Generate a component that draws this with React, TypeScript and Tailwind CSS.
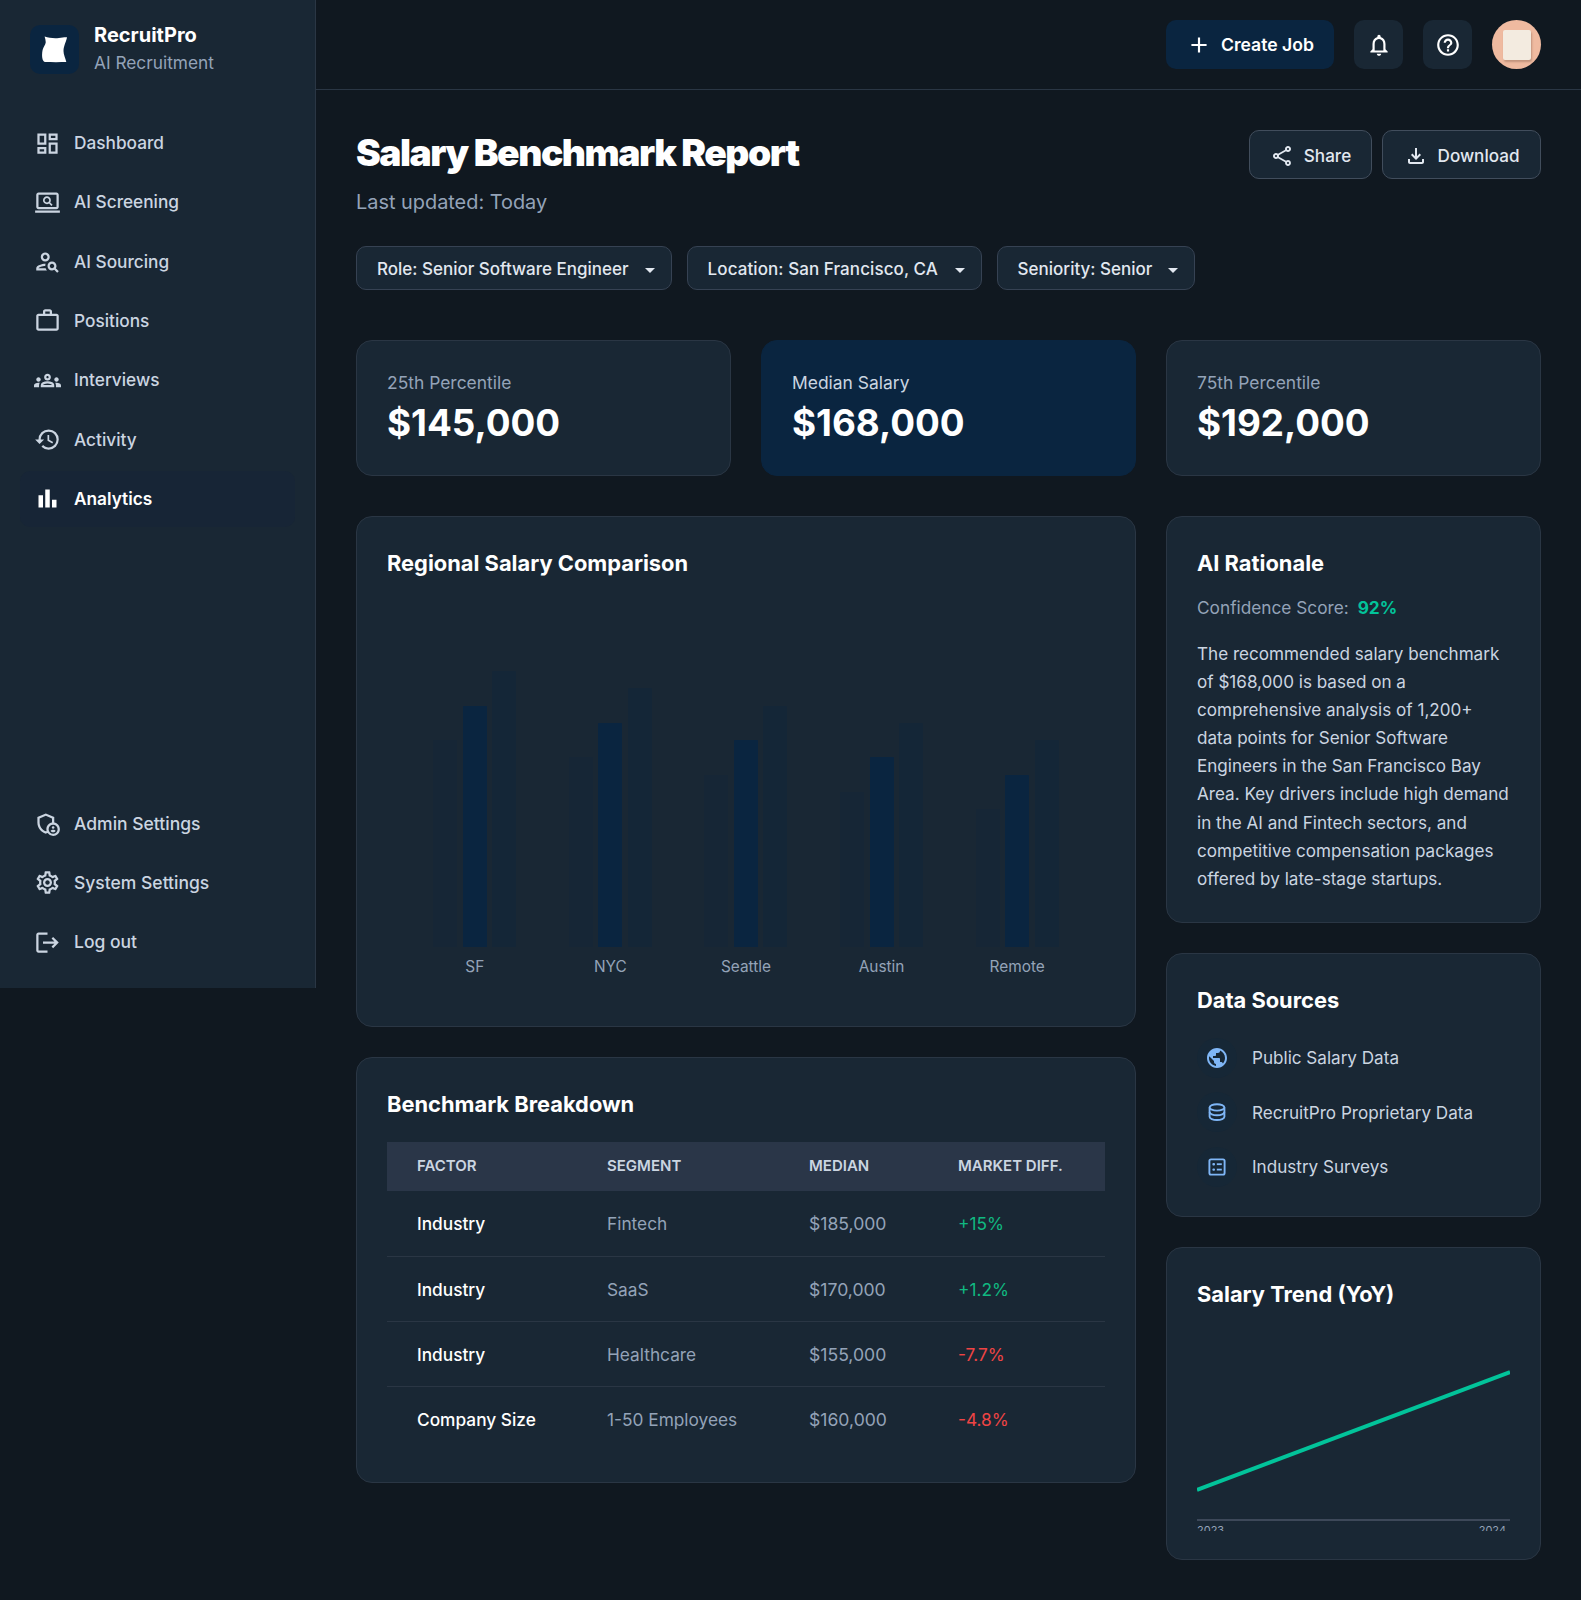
import type { ReactNode } from 'react'
import {
  MdAdd,
  MdArrowDropDown,
  MdBarChart,
  MdHelpOutline,
  MdHistory,
  MdLogout,
  MdOutlineAdminPanelSettings,
  MdOutlineDashboard,
  MdOutlineFileDownload,
  MdOutlineGroups,
  MdOutlineNotifications,
  MdOutlinePersonSearch,
  MdOutlineScreenSearchDesktop,
  MdOutlineSettings,
  MdOutlineShare,
  MdOutlineWorkOutline,
  MdPublic,
} from 'react-icons/md'

const topNav = [
  { label: 'Dashboard', icon: <MdOutlineDashboard size={27} /> },
  { label: 'AI Screening', icon: <MdOutlineScreenSearchDesktop size={27} /> },
  { label: 'AI Sourcing', icon: <MdOutlinePersonSearch size={27} /> },
  { label: 'Positions', icon: <MdOutlineWorkOutline size={27} /> },
  { label: 'Interviews', icon: <MdOutlineGroups size={27} /> },
  { label: 'Activity', icon: <MdHistory size={27} /> },
  { label: 'Analytics', icon: <MdBarChart size={27} />, active: true },
]

const bottomNav = [
  { label: 'Admin Settings', icon: <MdOutlineAdminPanelSettings size={27} /> },
  { label: 'System Settings', icon: <MdOutlineSettings size={27} /> },
  { label: 'Log out', icon: <MdLogout size={27} /> },
]

const regions = [
  { name: 'SF', bars: [60, 70, 80] },
  { name: 'NYC', bars: [55, 65, 75] },
  { name: 'Seattle', bars: [50, 60, 70] },
  { name: 'Austin', bars: [45, 55, 65] },
  { name: 'Remote', bars: [40, 50, 60] },
]

const rows = [
  { factor: 'Industry', segment: 'Fintech', median: '$185,000', diff: '+15%', up: true },
  { factor: 'Industry', segment: 'SaaS', median: '$170,000', diff: '+1.2%', up: true },
  { factor: 'Industry', segment: 'Healthcare', median: '$155,000', diff: '-7.7%', up: false },
  { factor: 'Company Size', segment: '1-50 Employees', median: '$160,000', diff: '-4.8%', up: false },
]

function DatabaseIcon() {
  return (
    <svg width="24" height="24" viewBox="0 0 24 24" fill="none" stroke="currentColor" strokeWidth="1.9">
      <ellipse cx="12" cy="7.400" rx="7.400" ry="3.200" />
      <path d="M4.600 7.400v9.400c0 1.800 3.300 3.200 7.400 3.200s7.400-1.400 7.400-3.200V7.400" />
      <path d="M4.600 12.100c0 1.800 3.300 3.200 7.400 3.200s7.400-1.400 7.400-3.200" />
    </svg>
  )
}

function SurveyIcon() {
  return (
    <svg width="24" height="24" viewBox="0 0 24 24" fill="currentColor">
      <rect x="4.400" y="4.400" width="15.200" height="15.200" rx="1.600" fill="none" stroke="currentColor" strokeWidth="1.900" />
      <rect x="7.400" y="8" width="2.600" height="2.400" rx="1" />
      <rect x="7.400" y="13.400" width="2.600" height="2.400" rx="1" />
      <rect x="11.800" y="8.300" width="5" height="1.800" />
      <rect x="11.800" y="13.700" width="5" height="1.800" />
    </svg>
  )
}

const sources = [
  { label: 'Public Salary Data', icon: <MdPublic size={24} /> },
  { label: 'RecruitPro Proprietary Data', icon: <DatabaseIcon /> },
  { label: 'Industry Surveys', icon: <SurveyIcon /> },
]

function NavItem({ label, icon, active }: { label: string; icon: ReactNode; active?: boolean }) {
  return (
    <a
      className={
        active
          ? 'flex h-14 items-center gap-[13px] rounded-[10px] bg-[#172536] pl-[14px] font-semibold text-white'
          : 'flex h-14 items-center gap-[13px] rounded-[10px] pl-[14px] font-medium text-[#cbd5e1]'
      }
    >
      <span className="flex w-[27px] shrink-0 justify-center">{icon}</span>
      {label}
    </a>
  )
}

function Sidebar() {
  return (
    <aside className="flex h-[988px] w-[316px] shrink-0 flex-col justify-between border-r border-[#2a3644] bg-[#192734] px-5 pt-[21px] pb-[18px]">
      <div>
        <div className="flex items-center gap-[15px] pl-[10px]">
          <div className="flex h-[49px] w-[49px] items-center justify-center rounded-[10px] bg-[#0a2540]">
            <svg width="26" height="27" viewBox="0 0 26 27">
              <path
                d="M2.600 .5C7 2 12 2.500 17 2 20 1.700 23 1 25 1.300 24.500 5 21.500 10 21.500 15 21.500 19 23.500 22 24.300 26 18 26.200 10 26.200 3.300 26 1.500 25.800 .8 24.500 .3 22-.2 19 .2 16 .6 14 1.200 11 3.500 9 3.700 6.500 3.800 4.500 3.200 2.500 2.600 .5Z"
                fill="#fff"
              />
            </svg>
          </div>
          <div>
            <p className="text-[20px] leading-[28px] font-bold text-white">RecruitPro</p>
            <p className="text-[17.3px] leading-[28px] text-[#94a3b8]">AI Recruitment</p>
          </div>
        </div>
        <nav className="mt-[38px] flex flex-col gap-[3.3px] text-[17.25px]">
          {topNav.map((item) => (
            <NavItem key={item.label} {...item} />
          ))}
        </nav>
      </div>
      <nav className="flex flex-col gap-[3.2px] text-[17.5px]">
        {bottomNav.map((item) => (
          <NavItem key={item.label} {...item} />
        ))}
      </nav>
    </aside>
  )
}

function TopBar() {
  return (
    <header className="flex h-[90px] items-center justify-end gap-5 border-b border-[#2a3644] px-10">
      <button className="flex h-[49px] w-[168px] items-center justify-center gap-[9px] rounded-[10px] bg-[#0a2540] text-[17.6px] font-semibold text-white">
        <MdAdd size={26} />
        <span className="pt-[2px]">Create Job</span>
      </button>
      <button className="flex h-[49px] w-[49px] items-center justify-center rounded-[10px] bg-[#192734] text-white">
        <MdOutlineNotifications size={26} />
      </button>
      <button className="flex h-[49px] w-[49px] items-center justify-center rounded-[10px] bg-[#192734] text-white">
        <MdHelpOutline size={26} />
      </button>
      <div className="flex h-[49px] w-[49px] items-center justify-center rounded-full bg-[#efbaa0]">
        <div className="h-[30px] w-[28px] rounded-[2px] bg-[#f3ebe0] shadow-[1px_2px_2px_rgba(150,110,90,0.5)]" />
      </div>
    </header>
  )
}

function Filter({ label, className }: { label: string; className?: string }) {
  return (
    <button
      className={
        'flex h-[44px] items-center justify-between gap-[9px] rounded-[10px] border border-[#364253] bg-[#192734] pt-[3px] pr-[9px] pl-5 text-[17px] font-medium text-[#e2e8f0] ' +
        (className ?? '')
      }
    >
      {label}
      <MdArrowDropDown size={24} />
    </button>
  )
}

function Stat({ label, value, highlight }: { label: string; value: string; highlight?: boolean }) {
  return (
    <div
      className={
        highlight
          ? 'h-[136px] rounded-2xl border border-[#0a2540] bg-[#0a2540] px-[30px] pt-[28px]'
          : 'h-[136px] rounded-2xl border border-[#2a3644] bg-[#192734] px-[30px] pt-[28px]'
      }
    >
      <p className={highlight ? 'text-[17.45px] leading-[28px] text-[#cbd5e1]' : 'text-[17.45px] leading-[28px] text-[#94a3b8]'}>
        {label}
      </p>
      <p className="text-[36.8px] leading-[52px] font-bold text-white">{value}</p>
    </div>
  )
}

function Card({ className, children }: { className: string; children: ReactNode }) {
  return <section className={'rounded-2xl border border-[#2a3644] bg-[#192734] p-[30px] ' + className}>{children}</section>
}

function CardTitle({ children }: { children: ReactNode }) {
  return <h3 className="text-[21.85px] leading-[32px] font-bold text-white">{children}</h3>
}

export default function App() {
  return (
    <div className="flex min-h-[1600px] bg-[#101820] font-['Inter',sans-serif]">
      <Sidebar />
      <main className="min-w-0 flex-1">
        <TopBar />
        <div className="px-10 pt-10">
          <div className="flex items-start justify-between">
            <div>
              <h1 className="text-[37.25px] leading-[45px] font-black tracking-[-0.04em] text-white">Salary Benchmark Report</h1>
              <p className="mt-[13px] text-[19.9px] leading-[28px] text-[#94a3b8]">Last updated: Today</p>
            </div>
            <div className="flex gap-[10px]">
              <button className="flex h-[49px] w-[123px] items-center justify-center gap-[10px] rounded-[10px] border border-[#414d5c] bg-[#192734] pt-[2px] text-[17.1px] font-medium text-[#e2e8f0]">
                <MdOutlineShare size={24} />
                Share
              </button>
              <button className="flex h-[49px] w-[159px] items-center justify-center gap-[10px] rounded-[10px] border border-[#414d5c] bg-[#192734] pt-[2px] text-[17.1px] font-medium text-[#e2e8f0]">
                <MdOutlineFileDownload size={24} />
                Download
              </button>
            </div>
          </div>

          <div className="mt-[30px] flex gap-[15px]">
            <Filter label="Role: Senior Software Engineer" />
            <Filter label="Location: San Francisco, CA" className="w-[295px] tracking-[0.08px]" />
            <Filter label="Seniority: Senior" />
          </div>

          <div className="mt-[50px] grid grid-cols-3 gap-[30px]">
            <Stat label="25th Percentile" value="$145,000" />
            <Stat label="Median Salary" value="$168,000" highlight />
            <Stat label="75th Percentile" value="$192,000" />
          </div>

          <div className="mt-[40px] grid grid-cols-3 items-start gap-[30px]">
            <div className="col-span-2 flex flex-col gap-[30px]">
              <Card className="h-[511px]">
                <CardTitle>Regional Salary Comparison</CardTitle>
                <div className="mt-[23px] flex h-[345px] items-end justify-around px-5">
                  {regions.map((region) => (
                    <div key={region.name} className="flex h-full w-[83px] items-end justify-between">
                      {region.bars.map((height, i) => (
                        <div
                          key={i}
                          className={
                            i === 1
                              ? 'w-[24px] rounded-t-[1px] bg-[#0a2540]'
                              : i === 0
                                ? 'w-[24px] rounded-t-[1px] bg-[#0a2540]/20'
                                : 'w-[24px] rounded-t-[1px] bg-[#0a2540]/30'
                          }
                          style={{ height: height + '%' }}
                        />
                      ))}
                    </div>
                  ))}
                </div>
                <div className="mt-[8px] flex justify-around px-5">
                  {regions.map((region) => (
                    <span key={region.name} className="w-[83px] text-center text-[15.4px] leading-[24px] text-[#94a3b8]">
                      {region.name}
                    </span>
                  ))}
                </div>
              </Card>

              <Card className="h-[426px]">
                <CardTitle>Benchmark Breakdown</CardTitle>
                <table className="mt-[22px] w-full table-fixed border-collapse text-[17.3px]">
                  <thead>
                    <tr className="h-[49px] bg-[#2a3648] text-left text-[15px] text-[#cbd5e1] uppercase">
                      <th className="w-[220px] pl-[30px] font-semibold">Factor</th>
                      <th className="w-[202px] font-semibold">Segment</th>
                      <th className="w-[149px] font-semibold">Median</th>
                      <th className="font-semibold">Market Diff.</th>
                    </tr>
                  </thead>
                  <tbody>
                    {rows.map((row, i) => (
                      <tr key={i} className={i < rows.length - 1 ? 'h-[65.200px] border-b border-[#2a3644]' : 'h-[65.200px]'}>
                        <td className="pt-[2px] pl-[30px] font-medium text-white">{row.factor}</td>
                        <td className="pt-[2px] text-[#94a3b8]">{row.segment}</td>
                        <td className="pt-[2px] text-[17.6px] text-[#94a3b8]">{row.median}</td>
                        <td className={row.up ? 'pt-[2px] text-[#10b981]' : 'pt-[2px] text-[#ef4444]'}>{row.diff}</td>
                      </tr>
                    ))}
                  </tbody>
                </table>
              </Card>
            </div>

            <div className="flex flex-col gap-[30px]">
              <Card className="h-[407px]">
                <CardTitle>AI Rationale</CardTitle>
                <p className="mt-[15px] text-[17.25px] leading-[28px] text-[#94a3b8]">
                  Confidence Score: <span className="ml-1 font-bold text-[#02c39a]">92%</span>
                </p>
                <p className="mt-[18px] text-[17.1px] leading-[28.100px] text-[#cbd5e1]">
                  The recommended salary benchmark of $168,000 is based on a comprehensive analysis of 1,200+ data points for Senior
                  Software Engineers in the San Francisco Bay Area. Key drivers include high demand in the AI and Fintech sectors, and
                  competitive compensation packages offered by late-stage startups.
                </p>
              </Card>

              <Card className="h-[264px]">
                <CardTitle>Data Sources</CardTitle>
                <ul className="mt-[22px] flex flex-col gap-[14.400px]">
                  {sources.map((source) => (
                    <li key={source.label} className="flex items-center gap-[15px] text-[17.1px] text-[#cbd5e1]">
                      <span className="flex h-10 w-10 items-center justify-center rounded-full bg-[#0a2540]/15 text-[#7fb6f6]">
                        {source.icon}
                      </span>
                      {source.label}
                    </li>
                  ))}
                </ul>
              </Card>

              <Card className="h-[313px]">
                <CardTitle>Salary Trend (YoY)</CardTitle>
                <svg viewBox="0 0 313 179" className="mt-[30px] block h-[179px] w-full">
                  <line x1="0" y1="150" x2="313" y2="32" stroke="#02c39a" strokeWidth="4" />
                </svg>
                <div className="h-[12px] overflow-hidden border-t-2 border-[#3d4859] pt-[2px]">
                  <div className="flex justify-between pr-[4px] text-[11px] leading-[14px] text-[#94a3b8]">
                    <span>2023</span>
                    <span>2024</span>
                  </div>
                </div>
              </Card>
            </div>
          </div>
        </div>
      </main>
    </div>
  )
}
